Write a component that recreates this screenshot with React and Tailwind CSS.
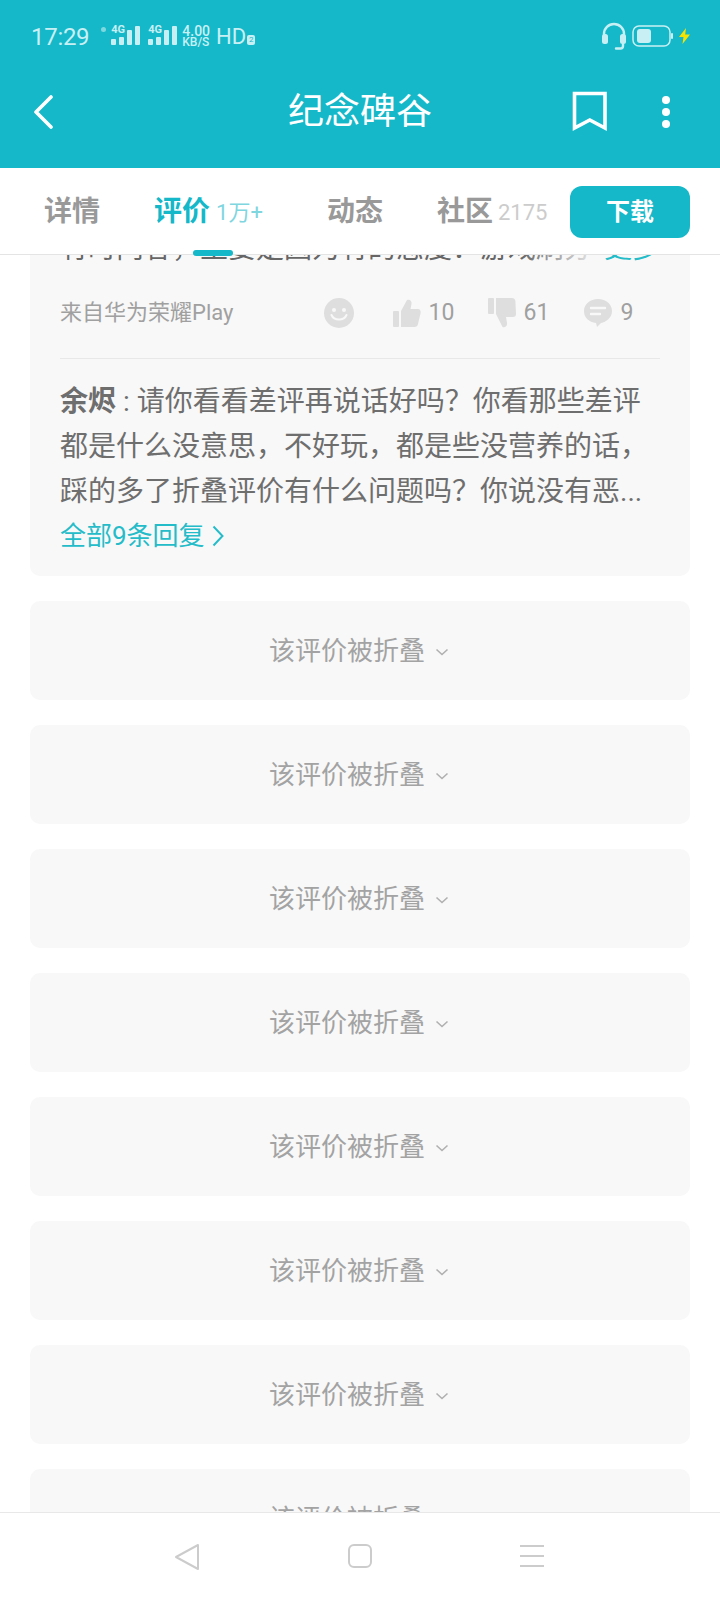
import React from 'react';

const font = { fontFamily: 'Roboto, "Noto Sans CJK SC", sans-serif' };

const Signal = () => (
    <div className="relative w-[29px] h-[20px]">
        <span className="absolute left-0 top-[-2px] text-[11px] leading-[12px] font-bold text-[#c8f0f4]">4G</span>
        <svg width="29" height="20" viewBox="0 0 29 20" className="absolute left-0 top-0" fill="#c8f0f4">
            <rect x="0" y="13" width="5" height="6" rx="1" />
            <rect x="8" y="11" width="5" height="8" rx="1" />
            <rect x="16" y="4" width="5" height="15" rx="1" />
            <rect x="24" y="0" width="5" height="19" rx="1" />
        </svg>
    </div>
);

const FoldedCard = () => (
    <div className="h-[99px] flex-shrink-0 bg-[#f8f8f8] rounded-[10px] flex items-center justify-center">
        <span className="text-[26px] leading-[36px] text-[#a3a3a3]">该评价被折叠</span>
        <svg width="14" height="10" viewBox="0 0 14 10" className="ml-[10px] mr-[2px] mt-[2px]" fill="none" stroke="#b0b0b0" strokeWidth="1.6">
            <path d="M1.5 2.5 L7 7.5 L12.5 2.5" />
        </svg>
    </div>
);

const App = () => {
    return (
        <div className="w-[720px] h-[1600px] flex flex-col overflow-hidden bg-white" style={font}>
            {/* --- STATUS + TITLE --- */}
            <div className="flex-shrink-0 h-[168px] bg-[#15b8c8]">
                <div className="h-[72px] flex items-center pl-[31px] pr-[30px]">
                    <span className="mt-[2px] text-[24px] leading-[28px] tracking-[-0.3px] text-[#c8f0f4]">17:29</span>
                    <span className="ml-[12px] mb-[14px] w-[5px] h-[5px] rounded-full bg-[#7fd8e0]" />
                    <div className="ml-[5px]"><Signal /></div>
                    <div className="ml-[8px]"><Signal /></div>
                    <div className="ml-[5px] mt-[1px] flex flex-col text-[#c8f0f4] font-medium">
                        <span className="text-[14px] leading-[12px]">4.00</span>
                        <span className="text-[12px] leading-[11px]">KB/S</span>
                    </div>
                    <span className="ml-[6px] mt-[2px] text-[22px] leading-[28px] text-[#c8f0f4]">HD</span>
                    <span className="ml-[1px] mt-[8px] w-[8px] h-[10px] rounded-[2px] bg-[#c8f0f4] text-[8px] leading-[10px] text-center text-[#15b8c8]">2</span>

                    <svg width="26" height="30" viewBox="0 0 26 30" className="ml-auto" fill="none">
                        <path d="M3 17 V13 a10 10 0 0 1 20 0 V17" stroke="#c8f0f4" strokeWidth="2.4" />
                        <rect x="1" y="13" width="6" height="10" rx="2.5" fill="#c8f0f4" />
                        <rect x="19" y="13" width="6" height="10" rx="2.5" fill="#c8f0f4" />
                        <path d="M22 23 V25 a2.5 2.5 0 0 1 -2.5 2.5 H15" stroke="#c8f0f4" strokeWidth="2.4" strokeLinecap="round" />
                    </svg>
                    <svg width="41" height="22" viewBox="0 0 41 22" className="ml-[5px]" fill="none">
                        <rect x="1" y="1" width="37" height="20" rx="6" stroke="#c8f0f4" strokeWidth="1.5" />
                        <rect x="5" y="4" width="14" height="14" rx="3" fill="#c8f0f4" />
                        <rect x="39" y="8" width="2" height="6" rx="1" fill="#c8f0f4" />
                    </svg>
                    <svg width="11" height="16" viewBox="0 0 11 16" className="ml-[6px]" fill="#f6e400">
                        <path d="M7 0 L0 9 H4.5 L3.5 16 L11 6.5 H6.2 Z" />
                    </svg>
                </div>
                <div className="relative h-[80px] flex items-center justify-center">
                    <span className="text-[36px] leading-[48px] text-white">纪念碑谷</span>
                    <svg width="20" height="34" viewBox="0 0 20 34" className="absolute left-[33px] top-[23px]" fill="none" stroke="white" strokeWidth="3.6" strokeLinecap="round" strokeLinejoin="round">
                        <path d="M18 2 L3 17 L18 32" />
                    </svg>
                    <svg width="36" height="41" viewBox="0 0 36 41" className="absolute left-[572px] top-[19px]" fill="none" stroke="white" strokeWidth="3.6">
                        <path d="M2.5 2.5 H33 V37 L17.8 29 L2.5 37 Z" />
                    </svg>
                    <div className="absolute left-[662px] top-[24px] flex flex-col gap-[4px]">
                        <span className="w-[8px] h-[8px] rounded-full bg-white" />
                        <span className="w-[8px] h-[8px] rounded-full bg-white" />
                        <span className="w-[8px] h-[8px] rounded-full bg-white" />
                    </div>
                </div>
            </div>

            {/* --- TABS --- */}
            <div className="relative z-10 flex-shrink-0 h-[87px] bg-white border-b border-[#e4e4e4] flex items-start pl-[44px] pr-[30px] pt-[18px]">
                <div className="h-[52px] flex items-center">
                    <span className="text-[28px] leading-[36px] font-bold text-[#999999]">详情</span>
                    <span className="ml-[54px] text-[28px] leading-[36px] font-bold text-[#15b8c8]">评价</span>
                    <span className="ml-[6px] mt-[1px] text-[22px] leading-[28px] text-[#7fd6df]">1万+</span>
                    <span className="ml-[64px] text-[28px] leading-[36px] font-bold text-[#999999]">动态</span>
                    <span className="ml-[54px] text-[28px] leading-[36px] font-bold text-[#999999]">社区</span>
                    <span className="ml-[5px] mt-[1px] text-[22px] leading-[28px] text-[#cccccc]">2175</span>
                </div>
                <div className="ml-auto w-[120px] h-[52px] rounded-[12px] bg-[#15b8c8] flex items-center justify-center text-[24px] font-bold text-white">
                    下载
                </div>
                <div className="absolute left-[193px] top-[82px] w-[40px] h-[6px] rounded-full bg-[#15b8c8]" />
            </div>

            {/* --- REVIEWS --- */}
            <div className="flex-1 overflow-hidden px-[30px] flex flex-col gap-[25px]">
                <div className="flex-shrink-0 bg-[#f8f8f8] rounded-b-[10px] px-[30px] pb-[20px]">
                    <div className="relative -mt-[29px] h-[45px] flex items-center justify-between text-[28px] leading-[45px] text-[#666666] whitespace-nowrap">
                        <span>有时内容，主要是因为有的态度：游戏刷分</span>
                        <div className="absolute left-[460px] top-0 w-[84px] h-[45px] bg-gradient-to-r from-transparent to-[#f8f8f8]" />
                        <span className="text-[#25bcc9]">更多</span>
                    </div>
                    <div className="mt-[22px] h-[40px] flex items-center">
                        <span className="text-[22px] leading-[30px] text-[#a0a0a0]">来自华为荣耀Play</span>
                        <svg width="30" height="30" viewBox="0 0 30 30" className="ml-[91px]">
                            <circle cx="15" cy="15" r="15" fill="#dedede" />
                            <circle cx="10" cy="12" r="2" fill="#f8f8f8" />
                            <circle cx="20" cy="12" r="2" fill="#f8f8f8" />
                            <path d="M7.5 17 C10 23 20 23 22.5 17" fill="none" stroke="#f8f8f8" strokeWidth="2" strokeLinecap="round" />
                        </svg>
                        <svg width="28" height="28" viewBox="0 0 28 28" className="ml-[39px]" fill="#dedede">
                            <rect x="0" y="12" width="6" height="16" rx="1" />
                            <path d="M8 12 L14 1 C17 0 19 2 18.5 5 L17.5 10 H25 C27 10 28 12 27.6 14 L25 25 C24.6 27 23.5 28 21.5 28 H8 Z" />
                        </svg>
                        <span className="ml-[7px] w-[23px] text-[23px] leading-[30px] text-[#a0a0a0]">10</span>
                        <svg width="28" height="30" viewBox="0 0 28 30" className="ml-[37px]" fill="#dedede">
                            <rect x="0" y="0" width="6" height="16" rx="1" />
                            <path d="M8 0 H24 C26 0 27 1 27.4 3 L28 16 C28 18 27 19 25 19 H18 L19 25 C19.5 28 17 30 14.5 29 L8 16 Z" />
                        </svg>
                        <span className="ml-[7px] w-[23px] text-[23px] leading-[30px] text-[#a0a0a0]">61</span>
                        <svg width="28" height="28" viewBox="0 0 28 28" className="ml-[38px]">
                            <path d="M14 0 C22 0 28 5 28 12 C28 19 22 23 17 24 L13 28 L12 24 C5 23 0 19 0 12 C0 5 6 0 14 0 Z" fill="#dedede" />
                            <path d="M7 9 H21 M7 15 H16" stroke="#f8f8f8" strokeWidth="2.4" strokeLinecap="round" />
                        </svg>
                        <span className="ml-[8px] text-[23px] leading-[30px] text-[#a0a0a0]">9</span>
                    </div>
                    <div className="mt-[25px] h-[1px] bg-[#e8e8e8]" />
                    <p className="mt-[20px] text-[28px] leading-[45px] text-[#6e6e6e] whitespace-nowrap">
                        <span className="font-bold">余烬</span> : 请你看看差评再说话好吗？你看那些差评
                        <br />
                        都是什么没意思，不好玩，都是些没营养的话，
                        <br />
                        踩的多了折叠评价有什么问题吗？你说没有恶...
                    </p>
                    <div className="mt-[2px] h-[40px] flex items-center">
                        <span className="text-[26px] leading-[36px] text-[#25bcc9]">全部9条回复</span>
                        <svg width="12" height="22" viewBox="0 0 12 22" className="ml-[7px]" fill="none" stroke="#25bcc9" strokeWidth="2">
                            <path d="M1.5 1.5 L10.5 11 L1.5 20.5" />
                        </svg>
                    </div>
                </div>
                {[...Array(8)].map((_, i) => (
                    <FoldedCard key={i} />
                ))}
            </div>

            {/* --- NAV BAR --- */}
            <div className="relative z-10 flex-shrink-0 h-[88px] bg-white border-t border-[#e8e8e8] flex items-start pt-[30px]">
                <svg width="26" height="28" viewBox="0 0 26 28" className="ml-[174px]" fill="none" stroke="#cccccc" strokeWidth="2" strokeLinejoin="round">
                    <path d="M24 2 V26 L2 14 Z" />
                </svg>
                <svg width="24" height="24" viewBox="0 0 24 24" className="ml-[148px] mt-[1px]" fill="none" stroke="#cccccc" strokeWidth="2">
                    <rect x="1" y="1" width="22" height="22" rx="5" />
                </svg>
                <svg width="24" height="24" viewBox="0 0 24 24" className="ml-[148px] mt-[1px]" fill="none" stroke="#cccccc" strokeWidth="2">
                    <path d="M0 2 H24 M0 12 H24 M0 22 H24" />
                </svg>
            </div>
        </div>
    );
};

export default App;
